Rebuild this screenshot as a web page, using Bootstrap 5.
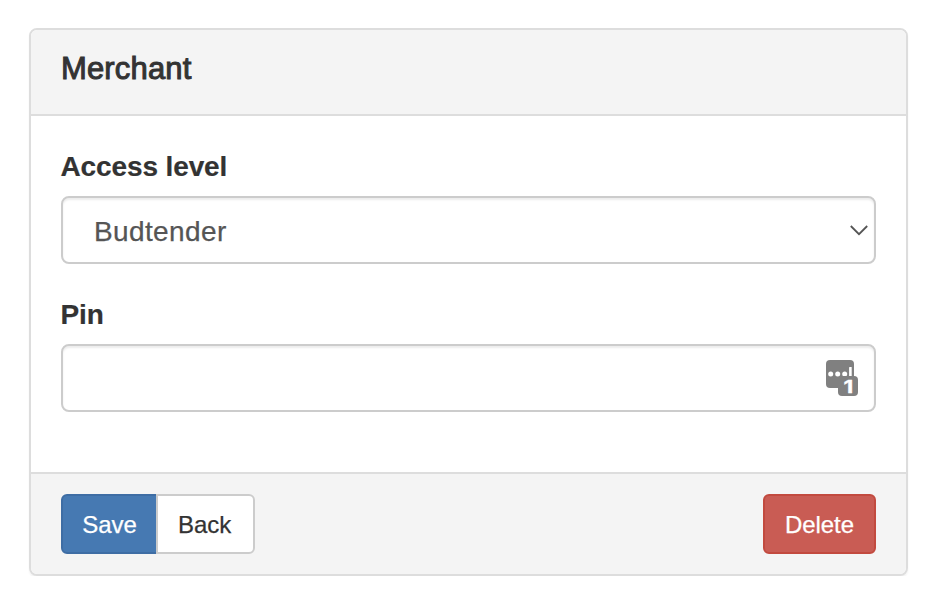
<!DOCTYPE html>
<html lang="en">
<head>
<meta charset="utf-8">
<meta name="viewport" content="width=device-width, initial-scale=1">
<title>Merchant</title>
<link href="https://cdn.jsdelivr.net/npm/bootstrap@5.3.0/dist/css/bootstrap.min.css" rel="stylesheet">
<style>
body { font-family: "Liberation Sans", Arial, sans-serif; font-size: 28px; line-height: 40px; color: #333; background: #fff; overflow: hidden; }
.page { padding: 28px 28px 0 29px; }
.panel { --bs-card-border-width: 2px; --bs-card-border-color: #ddd; --bs-card-border-radius: 8px; --bs-card-inner-border-radius: 6px; --bs-card-cap-bg: #f4f4f4; height: 548px; box-shadow: 0 2px 2px rgba(0,0,0,.05); color: #333; }
.panel .card-header { height: 86px; padding: 21px 30px 0; }
.panel .card-body { padding: 31px 30px 0; }
.panel .card-footer { height: 102px; padding: 20px 30px 0; }
.panel-title { font-size: 31px; line-height: 36px; font-weight: 400; letter-spacing: .15px; -webkit-text-stroke: 1px #333; }
.panel .form-label { display: block; font-weight: 700; line-height: 40px; margin: 0 0 9px; letter-spacing: -.12px; text-indent: -.5px; -webkit-text-stroke: .2px #333; }
.panel .pin-label { padding-top: 31px; }
.field, .field:focus { height: 68px; border: 2px solid #ccc; border-radius: 8px; font-size: 28px; color: #555; box-shadow: inset 0 2px 2px rgba(0,0,0,.075); }
.field.form-select { padding: 3px 64px 0 31px; line-height: 61px; letter-spacing: .38px; background-image: none; -webkit-text-stroke: .25px #555; }
.chevron { position: absolute; right: 7px; top: 28px; pointer-events: none; }
.pin-icon { position: absolute; right: 17px; top: 15px; }
.panel .btn { height: 60px; border-width: 2px; border-radius: 6px; font-size: 24px; line-height: 36px; padding: 11px 0 9px; letter-spacing: -.05px; -webkit-text-stroke: .25px currentColor; }
.btn-save { --bs-btn-color: #fff; --bs-btn-bg: #4679b2; --bs-btn-border-color: #3e6da4; width: 97px; }
.btn-back { --bs-btn-color: #333; --bs-btn-bg: #fff; --bs-btn-border-color: #ccc; width: 99px; }
.panel .btn-group > .btn { flex: none; }
.panel .btn-group > .btn-save { border-radius: 6px 0 0 6px; }
.panel .btn-group > .btn-back:not(:first-child) { margin-left: -2px; padding-right: 2px; z-index: 1; border-radius: 0 6px 6px 0; }
.btn-remove { --bs-btn-color: #fff; --bs-btn-bg: #c95c54; --bs-btn-border-color: #c24a3f; width: 113px; }
</style>
</head>
<body>
<main class="page">
  <form class="card panel">
    <div class="card-header"><h3 class="panel-title mb-0">Merchant</h3></div>
    <div class="card-body">
      <label class="form-label" for="level">Access level</label>
      <div class="position-relative">
        <select class="form-select field" id="level"><option>Budtender</option></select>
        <svg class="chevron" width="20" height="13" viewBox="0 0 20 13" fill="none" stroke="#555" stroke-width="1.8"><path d="M1.8 2 10 10.2 18.2 2"/></svg>
      </div>
      <label class="form-label pin-label" for="pin">Pin</label>
      <div class="position-relative">
        <input class="form-control field" id="pin" type="password">
        <svg class="pin-icon" width="34" height="38" viewBox="0 0 34 38">
          <rect x="1" y="1" width="28" height="28" rx="4" fill="#808080"/>
          <g fill="#fff"><circle cx="5.7" cy="15" r="2.5"/><circle cx="12.7" cy="15" r="2.5"/><circle cx="19.7" cy="15" r="2.5"/><rect x="24.1" y="8" width="2.6" height="11" rx=".6"/></g>
          <rect x="13" y="17" width="20" height="20" rx="4" fill="#808080"/>
          <text transform="translate(23.4 33.6) scale(1.3 1)" text-anchor="middle" font-family="Inter, sans-serif" font-weight="700" font-size="17.5" fill="#fff" stroke="#fff" stroke-width=".3">1</text>
        </svg>
      </div>
    </div>
    <div class="card-footer d-flex justify-content-between align-items-start">
      <div class="btn-group">
        <button type="button" class="btn btn-save">Save</button>
        <button type="button" class="btn btn-back">Back</button>
      </div>
      <button type="button" class="btn btn-remove">Delete</button>
    </div>
  </form>
</main>
<script src="https://cdn.jsdelivr.net/npm/bootstrap@5.3.0/dist/js/bootstrap.bundle.min.js"></script>
</body>
</html>
